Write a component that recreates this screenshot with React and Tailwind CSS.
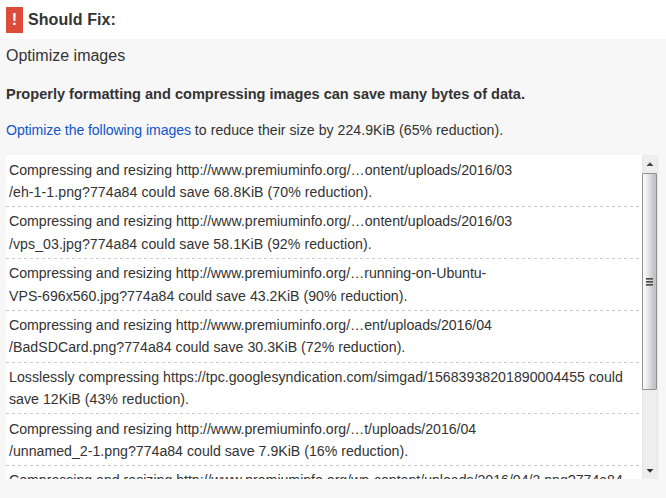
const items = [
  { a: "Compressing and resizing http://www.premiuminfo.org/…ontent/uploads/2016/03", b: "/eh-1-1.png?774a84 could save 68.8KiB (70% reduction).", box: "h-[52px] pt-1", first: "tracking-[-0.02px]", second: "tracking-[0.06px]", lead: "h-[22px]" },
  { a: "Compressing and resizing http://www.premiuminfo.org/…ontent/uploads/2016/03", b: "/vps_03.jpg?774a84 could save 58.1KiB (92% reduction).", box: "h-[52px] pt-[3px]", first: "tracking-[-0.02px]", second: "tracking-[0.05px]", lead: "h-[23px]" },
  { a: "Compressing and resizing http://www.premiuminfo.org/…running-on-Ubuntu-", b: "VPS-696x560.jpg?774a84 could save 43.2KiB (90% reduction).", box: "h-[52px] pt-[3px]", first: "tracking-[-0.03px]", second: "tracking-[0.01px]", lead: "h-[23px]" },
  { a: "Compressing and resizing http://www.premiuminfo.org/…ent/uploads/2016/04", b: "/BadSDCard.png?774a84 could save 30.3KiB (72% reduction).", box: "h-[52px] pt-[3px]", first: "tracking-[-0.03px]", second: "tracking-[0.03px]", lead: "h-[22px]" },
  { a: "Losslessly compressing https://tpc.googlesyndication.com/simgad/15683938201890004455 could", b: "save 12KiB (43% reduction).", box: "h-[51px] pt-[3px]", first: "tracking-[0.035px]", second: "tracking-[0.03px]", lead: "h-[22px]" },
  { a: "Compressing and resizing http://www.premiuminfo.org/…t/uploads/2016/04", b: "/unnamed_2-1.png?774a84 could save 7.9KiB (16% reduction).", box: "h-[52px] pt-1", first: "tracking-[-0.03px]", second: "tracking-[0.01px]", lead: "h-[22px]" },
  { a: "Compressing and resizing http://www.premiuminfo.org/wp-content/uploads/2016/04/3.png?774a84", b: "", box: "h-[52px] pt-[3px]", first: "tracking-[-0.01px]", second: "tracking-[0px]", lead: "h-[22px]" },
];

function Scrollbar() {
  return (
    <div className="flex h-full w-4 shrink-0 flex-col items-start bg-[#eeeeee] shadow-[inset_-1px_0_#e6e6e6,inset_1px_0_#e6e6e6]">
      <svg className="h-[18px] w-4 shrink-0" viewBox="0 0 16 18">
        <path d="M4.5 11 8 7.3 11.5 11Z" fill="#444" />
      </svg>
      <div className="flex h-[217px] w-[15px] shrink-0 flex-col items-center justify-center gap-px rounded-[1px] border border-[#929292] bg-linear-to-r from-[#f8f8f8] from-10% via-[#e2e2e4] via-45% to-[#c2c2c8] to-85%">
        <span className="h-0.5 w-[7px] bg-linear-to-b from-[#333] to-[#999]" />
        <span className="h-0.5 w-[7px] bg-linear-to-b from-[#333] to-[#999]" />
        <span className="h-0.5 w-[7px] bg-linear-to-b from-[#333] to-[#999]" />
      </div>
      <svg className="mt-auto h-[17px] w-4 shrink-0" viewBox="0 0 16 17">
        <path d="M4.5 7 8 10.7 11.5 7Z" fill="#333" />
      </svg>
    </div>
  );
}

export default function App() {
  return (
    <main className="h-[498px] w-[666px] overflow-hidden bg-[#f7f7f7] font-['Liberation_Sans',Arial,sans-serif] text-[#333]">
      <header className="flex h-[39px] items-start bg-white pt-[7px] pl-1.5">
        <span className="flex h-[26px] w-[17px] items-center justify-center bg-[#dd4b39] pb-px text-base font-bold text-white">!</span>
        <h1 className="ml-[5px] text-base leading-[25px] font-bold tracking-[0.08px]">Should Fix:</h1>
      </header>
      <section className="px-1.5">
        <h2 className="pt-1 text-base leading-[25px]">Optimize images</h2>
        <p className="mt-[15px] text-[14.56px] leading-[22px] font-bold whitespace-nowrap">Properly formatting and compressing images can save many bytes of data.</p>
        <p className="mt-[14px] text-[14.1px] leading-[22px] tracking-[0.04px] whitespace-nowrap">
          <a className="tracking-[-0.08px] text-[#1155cc]">Optimize the following images</a> to reduce their size by 224.9KiB (65% reduction).
        </p>
        <div className="mt-[14px] flex h-[324px] w-[652px] overflow-hidden bg-white">
          <ul className="w-[633px] shrink-0 text-[14.15px] leading-[22px] whitespace-nowrap">
            {items.map((item, i) => (
              <li key={i} className={`flex flex-col px-[3px] ${item.box}`}>
                <div className={`${item.lead} ${item.first}`}>{item.a}</div>
                <div className={item.second}>{item.b}</div>
                <div className="-mx-[3px] mt-auto h-px shrink-0 bg-[repeating-linear-gradient(90deg,#c8c8c8_0_3px,transparent_3px_6px)]" />
              </li>
            ))}
          </ul>
          <div className="ml-[3px]"><Scrollbar /></div>
        </div>
      </section>
    </main>
  );
}
